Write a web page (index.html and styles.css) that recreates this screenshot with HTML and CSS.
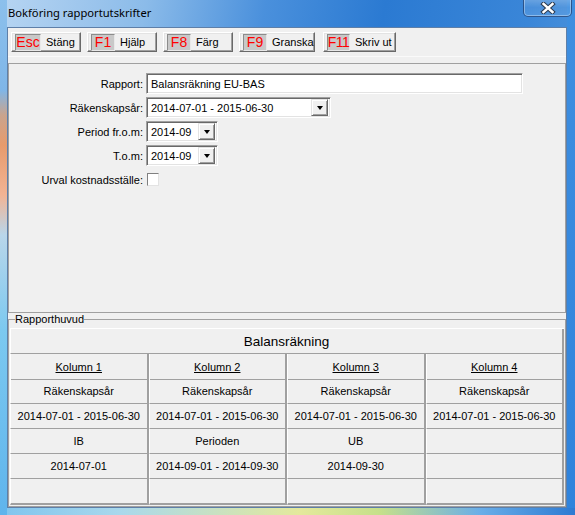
FILE: index.html
```html
<!DOCTYPE html>
<html>
<head>
<meta charset="utf-8">
<link rel="stylesheet" href="styles.css">
</head>
<body>
<div class="window">
  <div class="titlebar">
    <span class="title">Bokföring rapportutskrifter</span>
    <div class="close">
      <svg width="16" height="12" viewBox="0 0 16 12">
        <path d="M3.5 2 L12.5 10 M12.5 2 L3.5 10" stroke="#2b3a4f" stroke-width="4.4" stroke-linecap="square" fill="none"/>
        <path d="M3.5 2 L12.5 10 M12.5 2 L3.5 10" stroke="#ffffff" stroke-width="2.4" stroke-linecap="square" fill="none"/>
      </svg>
    </div>
  </div>
  <div class="client">
    <div class="toolbar">
      <div class="tbtn w70"><span class="key k26">Esc</span><span class="lbl">Stäng</span></div>
      <div class="tbtn w70"><span class="key">F1</span><span class="lbl">Hjälp</span></div>
      <div class="tbtn w70"><span class="key">F8</span><span class="lbl">Färg</span></div>
      <div class="tbtn w76"><span class="key">F9</span><span class="lbl">Granska</span></div>
      <div class="tbtn w73 g8"><span class="key k23">F11</span><span class="lbl">Skriv ut</span></div>
    </div>
    <div class="panel">
      <div class="form">
        <label class="flabel">Rapport:</label>
        <div class="field text wide">Balansräkning EU-BAS</div>
        <label class="flabel">Räkenskapsår:</label>
        <div class="field combo c185"><span class="val">2014-07-01 - 2015-06-30</span><span class="drop"><span class="arrow"></span></span></div>
        <label class="flabel">Period fr.o.m:</label>
        <div class="field combo c72"><span class="val">2014-09</span><span class="drop"><span class="arrow"></span></span></div>
        <label class="flabel">T.o.m:</label>
        <div class="field combo c72"><span class="val">2014-09</span><span class="drop"><span class="arrow"></span></span></div>
        <label class="flabel">Urval kostnadsställe:</label>
        <div class="checkwrap"><span class="check"></span></div>
      </div>
    </div>
    <fieldset class="group">
      <legend>Rapporthuvud</legend>
      <div class="grid">
        <div class="cell head">Balansräkning</div>
        <div class="cell row1"><u>Kolumn 1</u></div>
        <div class="cell row1"><u>Kolumn 2</u></div>
        <div class="cell row1"><u>Kolumn 3</u></div>
        <div class="cell row1"><u>Kolumn 4</u></div>
        <div class="cell">Räkenskapsår</div>
        <div class="cell">Räkenskapsår</div>
        <div class="cell">Räkenskapsår</div>
        <div class="cell">Räkenskapsår</div>
        <div class="cell">2014-07-01 - 2015-06-30</div>
        <div class="cell">2014-07-01 - 2015-06-30</div>
        <div class="cell">2014-07-01 - 2015-06-30</div>
        <div class="cell">2014-07-01 - 2015-06-30</div>
        <div class="cell">IB</div>
        <div class="cell">Perioden</div>
        <div class="cell">UB</div>
        <div class="cell"></div>
        <div class="cell">2014-07-01</div>
        <div class="cell">2014-09-01 - 2014-09-30</div>
        <div class="cell">2014-09-30</div>
        <div class="cell"></div>
        <div class="cell last"></div>
        <div class="cell last"></div>
        <div class="cell last"></div>
        <div class="cell last"></div>
      </div>
    </fieldset>
  </div>
</div>
</body>
</html>
```

FILE: styles.css
```css
html, body {
  margin: 0;
  padding: 0;
}
body {
  width: 575px;
  height: 515px;
  overflow: hidden;
  font-family: "Liberation Sans", Arial, sans-serif;
  font-size: 11px;
  color: #000;
}
.window {
  width: 575px;
  height: 515px;
  box-sizing: border-box;
  display: flex;
  flex-direction: column;
  background:
    linear-gradient(to bottom, #8cc0ec 0px, #7fb6e8 90px, #c9a48e 115px, #e79b6c 145px, #f2b494 195px, #b9d6ea 235px, #7cc9f0 330px, #5fb4ec 515px) left top / 7px 100% no-repeat,
    linear-gradient(to right, #7fc4ee 0px, #a9d8ec 120px, #e4e99c 300px, #c6e08a 380px, #6aaee8 480px, #2d7ad2 575px) left bottom / 100% 7px no-repeat,
    linear-gradient(to bottom, #3f8fe0 0px, #2f83dc 515px) right top / 8px 100% no-repeat,
    linear-gradient(100deg, #b7d5f2 0%, #8bbbe9 22%, #4a90dc 40%, #2b7ad2 58%, #3a86d8 80%, #5c9fe0 100%);
}
.titlebar {
  height: 27px;
  display: flex;
  justify-content: space-between;
  align-items: flex-start;
  flex: none;
}
.title {
  font-family: "Noto Sans", "Open Sans", sans-serif;
  font-size: 11.2px;
  color: #000;
  padding-left: 8px;
  padding-top: 5px;
  line-height: 16px;
}
.close {
  width: 47px;
  height: 17px;
  margin-right: 3px;
  margin-top: -1px;
  border: 1px solid rgba(30, 60, 110, 0.75);
  border-top: none;
  border-radius: 0 0 5px 5px;
  background: linear-gradient(to bottom, rgba(255,255,255,0.25), rgba(255,255,255,0.08) 50%, rgba(140,190,240,0.25));
  box-shadow: inset 0 0 0 1px rgba(255,255,255,0.35);
  display: flex;
  align-items: center;
  justify-content: center;
}
.close svg {
  display: block;
}
.client {
  margin-left: 7px;
  width: 560px;
  height: 481px;
  box-sizing: border-box;
  border: 1px solid #5e7fa8;
  background: #f0f0f0;
  display: flex;
  flex-direction: column;
}
.toolbar {
  height: 29px;
  display: flex;
  align-items: flex-start;
  padding: 4px 0 0 3px;
  box-sizing: border-box;
  gap: 6px;
  border-bottom: 1px solid #fafafa;
  flex: none;
}
.tbtn {
  height: 20px;
  box-sizing: border-box;
  display: flex;
  align-items: center;
  flex: none;
  overflow: hidden;
  white-space: nowrap;
  background: #f0f0f0;
  border-top: 1px solid #ffffff;
  border-left: 1px solid #ffffff;
  border-right: 1px solid #696969;
  border-bottom: 1px solid #696969;
  box-shadow: inset -1px -1px 0 #a0a0a0, inset 1px 1px 0 #e3e3e3;
  padding: 0 0 0 3px;
}
.tbtn.g8 { margin-left: 2px; }
.w70 { width: 70px; }
.w73 { width: 73px; }
.w76 { width: 76px; }
.key {
  height: 17px;
  width: 24px;
  box-sizing: border-box;
  padding: 0;
  background: #c8c8c8;
  border-top: 1px solid #8c8c8c;
  border-left: 1px solid #8c8c8c;
  border-bottom: 1px solid #e8e8e8;
  border-right: 1px solid #e8e8e8;
  color: #ff0000;
  font-size: 14px;
  line-height: 15px;
  text-align: center;
  flex: none;
  display: flex;
  justify-content: center;
  overflow: visible;
}
.key.k26 { width: 26px; }
.key.k23 { width: 23px; letter-spacing: -0.5px; }
.lbl {
  margin-left: 5px;
  font-size: 11px;
}
.panel {
  margin-top: 6px;
  height: 250px;
  box-sizing: border-box;
  border: 1px solid #a0a0a0;
  padding-top: 9px;
  flex: none;
}
.form {
  display: grid;
  grid-template-columns: 134px auto;
  grid-auto-rows: 21px;
  column-gap: 3px;
  row-gap: 3px;
  align-items: center;
}
.flabel {
  text-align: right;
  white-space: nowrap;
}
.field {
  height: 21px;
  box-sizing: border-box;
  background: #fff;
  border-top: 1px solid #a0a0a0;
  border-left: 1px solid #a0a0a0;
  border-bottom: 1px solid #ffffff;
  border-right: 1px solid #ffffff;
  box-shadow: inset 1px 1px 0 #696969, inset -1px -1px 0 #e3e3e3;
  justify-self: start;
  display: flex;
  align-items: center;
  white-space: nowrap;
}
.text {
  padding-left: 4px;
}
.wide {
  width: 377px;
}
.combo {
  padding-left: 4px;
  justify-content: space-between;
}
.c185 { width: 185px; }
.c72 { width: 72px; }
.drop {
  width: 17px;
  height: 17px;
  box-sizing: border-box;
  margin-right: 2px;
  background: #f0f0f0;
  border-top: 1px solid #e3e3e3;
  border-left: 1px solid #e3e3e3;
  border-right: 1px solid #696969;
  border-bottom: 1px solid #696969;
  box-shadow: inset 1px 1px 0 #ffffff, inset -1px -1px 0 #a0a0a0;
  display: flex;
  align-items: center;
  justify-content: center;
}
.arrow {
  width: 0;
  height: 0;
  border-left: 3.5px solid transparent;
  border-right: 3.5px solid transparent;
  border-top: 4px solid #000;
  margin-left: 1px;
}
.checkwrap {
  display: flex;
  align-items: center;
  padding-left: 1px;
}
.check {
  width: 12px;
  height: 13px;
  box-sizing: border-box;
  background: #fff;
  border-top: 1px solid #808080;
  border-left: 1px solid #808080;
  border-right: 1px solid #e3e3e3;
  border-bottom: 1px solid #e3e3e3;
}
.group {
  margin: 0;
  padding: 0 0 1px 0;
  border: 1px solid #a0a0a0;
  min-width: 0;
  flex: 1;
}
.group legend {
  padding: 0;
  margin-left: 6px;
  font-size: 11px;
  line-height: 13px;
}
.grid {
  margin: 2px 1px 0 1px;
  display: grid;
  grid-template-columns: repeat(4, 1fr);
  grid-auto-rows: 25px;
  border-top: 1px solid #ffffff;
}
.cell {
  box-sizing: border-box;
  border-left: 1px solid #ffffff;
  border-right: 2px solid #a0a0a0;
  border-bottom: 1px solid #a0a0a0;
  display: flex;
  align-items: center;
  justify-content: center;
  white-space: nowrap;
  font-size: 11px;
}
.cell.head {
  grid-column: 1 / 5;
  font-size: 13.5px;
}
.cell.row1 {
  height: 26px;
}
.cell.last {
  border-bottom-width: 2px;
  height: 26px;
}
```
